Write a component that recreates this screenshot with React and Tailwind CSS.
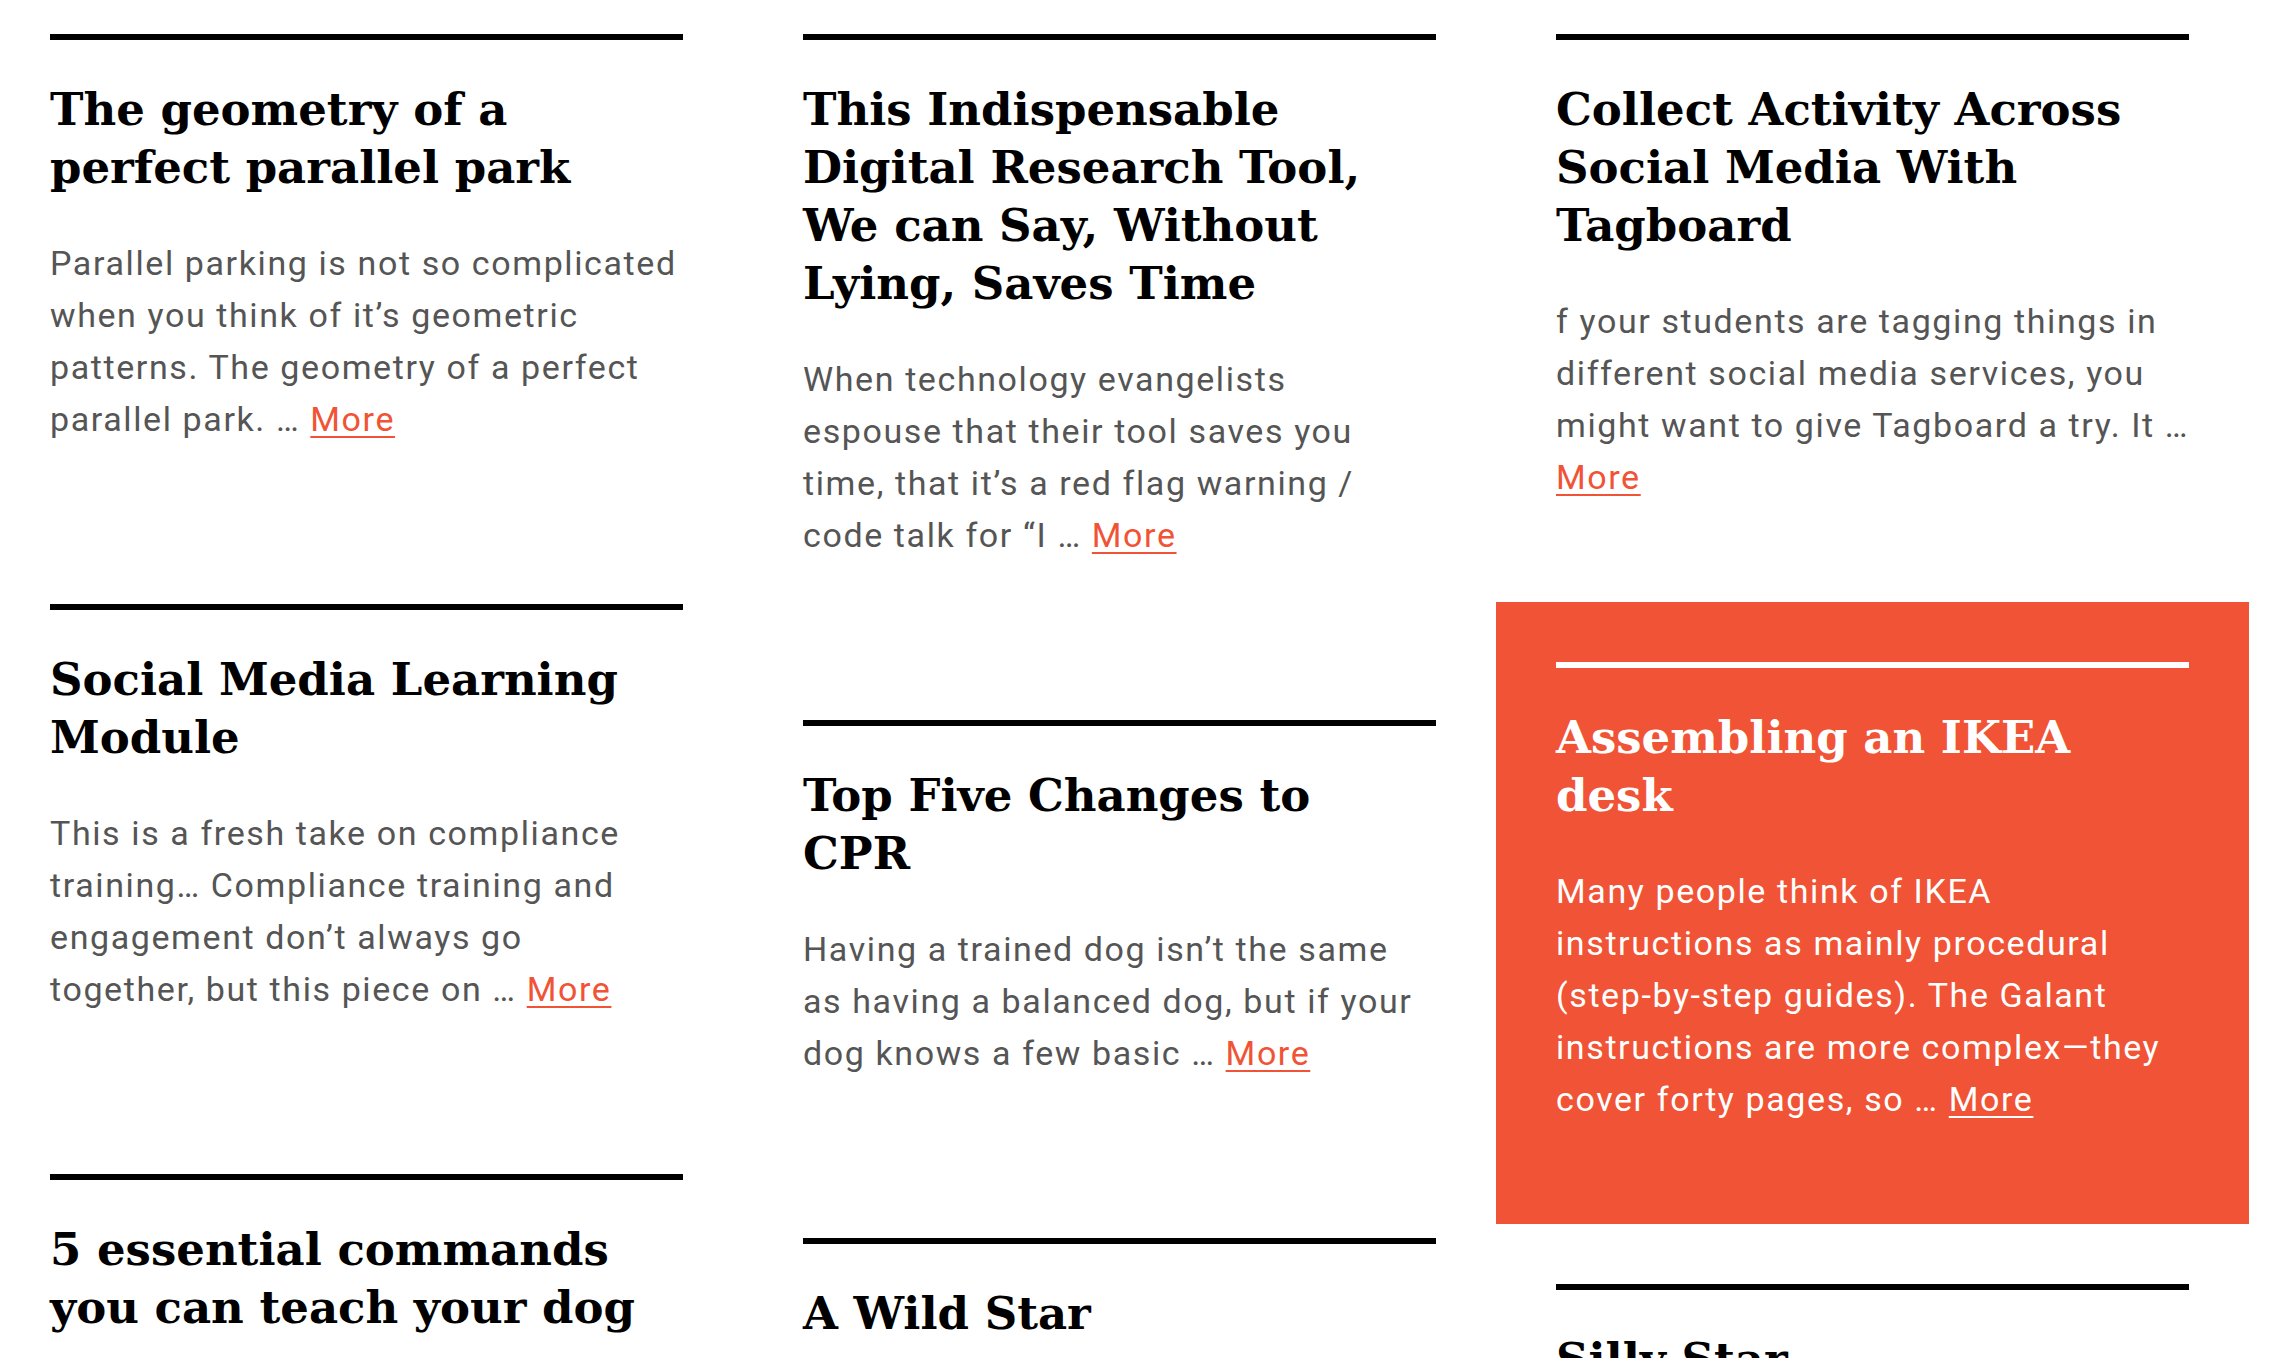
import React from "react";

const columns = [
  [
    {
      title: ["The geometry of a", "perfect parallel park"],
      body: [
        "Parallel parking is not so complicated",
        "when you think of it’s geometric",
        "patterns. The geometry of a perfect",
        "parallel park. … ",
      ],
    },
    {
      title: ["Social Media Learning", "Module"],
      body: [
        "This is a fresh take on compliance",
        "training… Compliance training and",
        "engagement don’t always go",
        "together, but this piece on … ",
      ],
    },
    {
      title: ["5 essential commands", "you can teach your dog"],
      body: null,
    },
  ],
  [
    {
      title: [
        "This Indispensable",
        "Digital Research Tool,",
        "We can Say, Without",
        "Lying, Saves Time",
      ],
      body: [
        "When technology evangelists",
        "espouse that their tool saves you",
        "time, that it’s a red flag warning /",
        "code talk for “I … ",
      ],
    },
    {
      title: ["Top Five Changes to", "CPR"],
      body: [
        "Having a trained dog isn’t the same",
        "as having a balanced dog, but if your",
        "dog knows a few basic … ",
      ],
    },
    {
      title: ["A Wild Star"],
      body: null,
    },
  ],
  [
    {
      title: ["Collect Activity Across", "Social Media With", "Tagboard"],
      body: [
        "f your students are tagging things in",
        "different social media services, you",
        "might want to give Tagboard a try. It …",
        "",
      ],
    },
    {
      orange: true,
      title: ["Assembling an IKEA", "desk"],
      body: [
        "Many people think of IKEA",
        "instructions as mainly procedural",
        "(step-by-step guides). The Galant",
        "instructions are more complex—they",
        "cover forty pages, so … ",
      ],
    },
    {
      title: ["Silly Star"],
      body: null,
    },
  ],
];

function Card({ card }) {
  const orange = !!card.orange;
  return (
    <article
      className={
        orange
          ? "bg-[#f05335] px-[60px] pt-[60px] pb-[99px]"
          : "px-[60px] pt-[60px] pb-[99px]"
      }
    >
      <div className={orange ? "h-[6px] bg-white" : "h-[6px] bg-black"} />
      <h2
        className={
          orange
            ? "mt-[41px] font-['DejaVu_Serif',serif] text-[45px] font-bold leading-[58px] text-white"
            : "mt-[41px] font-['DejaVu_Serif',serif] text-[45px] font-bold leading-[58px] text-black"
        }
      >
        {card.title.map((line, i) => (
          <span key={i} className="block whitespace-nowrap">
            {line}
          </span>
        ))}
      </h2>
      {card.body && (
        <p
          className={
            orange
              ? "mt-[40px] font-['Roboto',sans-serif] text-[34px] leading-[52px] tracking-[1.6px] text-white"
              : "mt-[40px] font-['Roboto',sans-serif] text-[34px] leading-[52px] tracking-[1.6px] text-[#555555]"
          }
        >
          {card.body.map((line, i) => (
            <span key={i} className="block whitespace-nowrap">
              {line}
              {i === card.body.length - 1 && (
                <a
                  href="#"
                  className={
                    orange
                      ? "text-white underline decoration-[2px] underline-offset-[5px]"
                      : "text-[#f05335] underline decoration-[2px] underline-offset-[5px]"
                  }
                >
                  More
                </a>
              )}
            </span>
          ))}
        </p>
      )}
    </article>
  );
}

export default function App() {
  return (
    <div className="h-screen w-full overflow-hidden bg-white">
      <div className="-mt-[26px] -ml-[10px] flex items-start">
        {columns.map((col, ci) => (
          <div key={ci} className="flex w-[753px] shrink-0 flex-col">
            {col.map((card, i) => (
              <Card key={i} card={card} />
            ))}
          </div>
        ))}
      </div>
    </div>
  );
}
